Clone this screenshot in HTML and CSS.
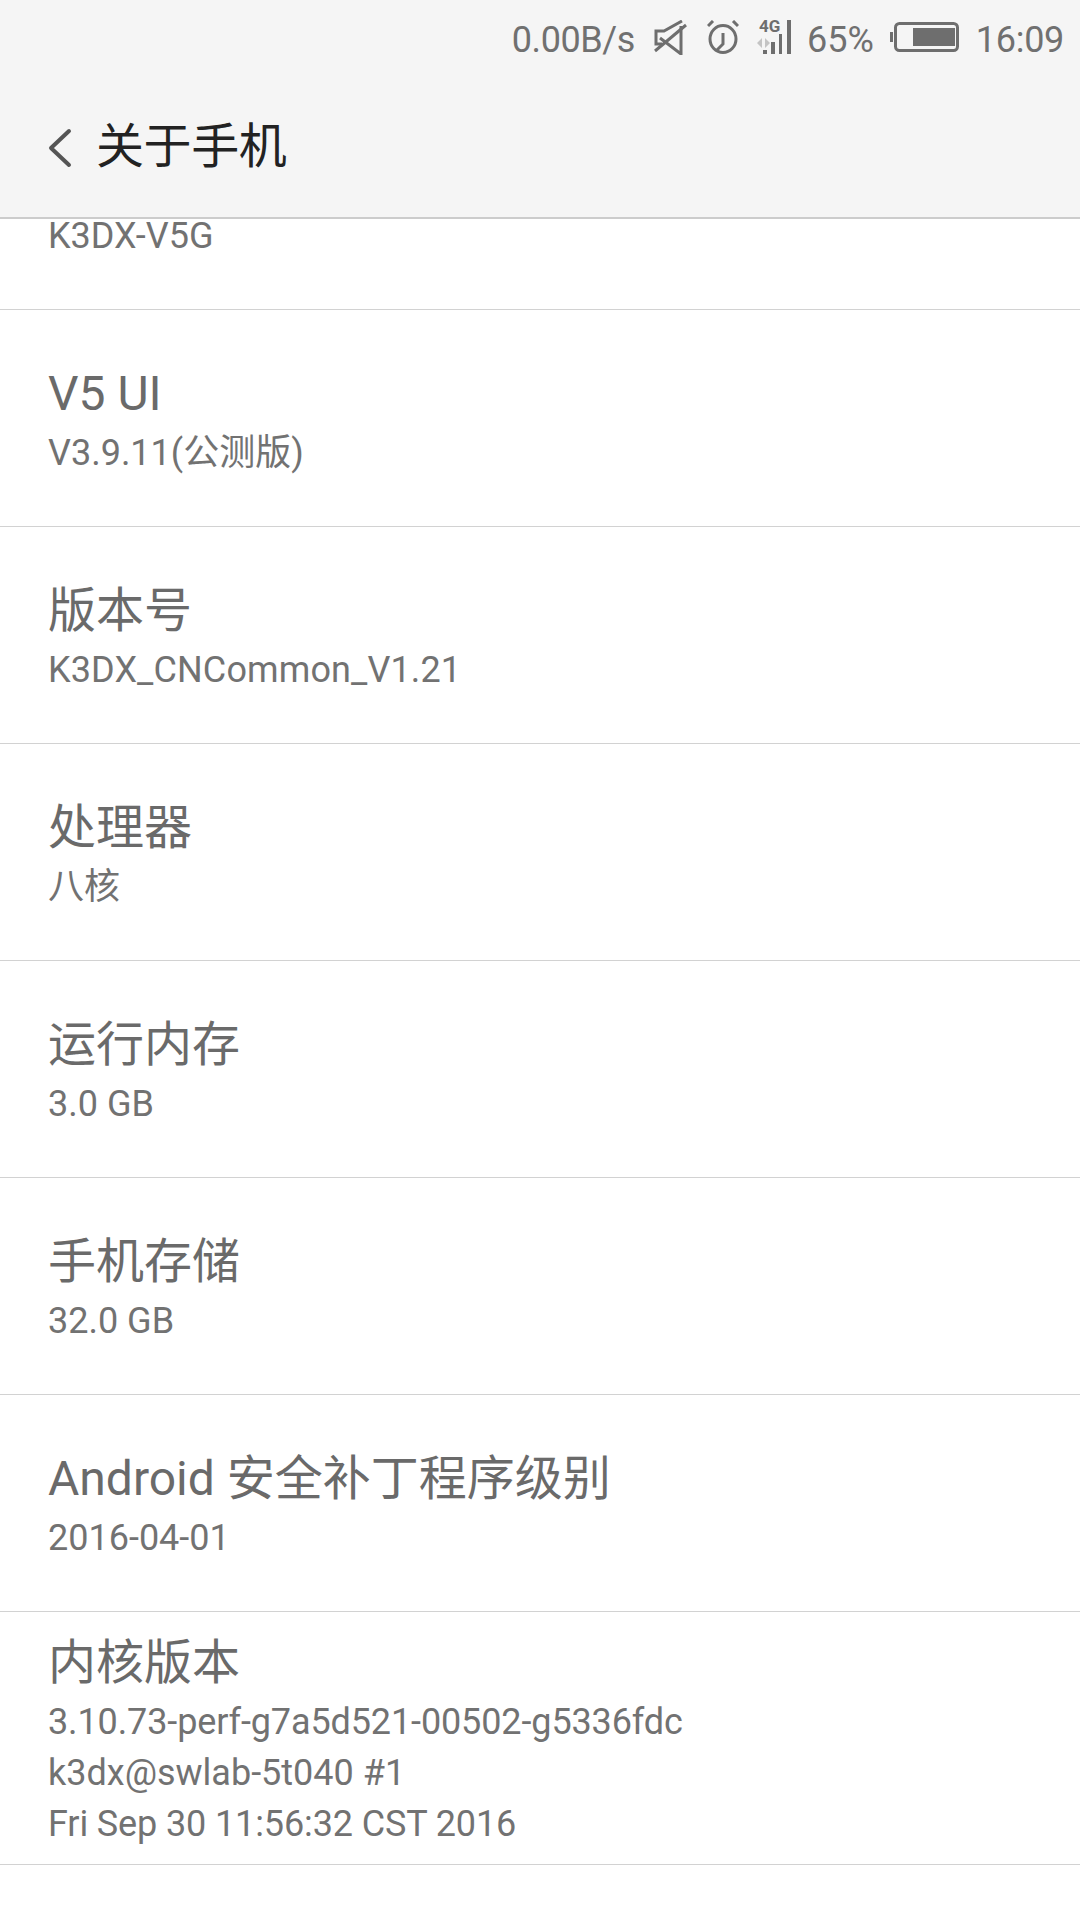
FILE: index.html
```html
<!DOCTYPE html>
<html lang="zh-CN">
<head>
    <meta charset="UTF-8">
    <meta name="viewport" content="width=device-width, initial-scale=1.0">
    <title>关于手机</title>
    <link rel="stylesheet" href="styles.css">
</head>
<body>
    <div class="top">
        <div class="status">
            <span class="speed">0.00B/s</span>
            <svg class="icon icon-mute" width="33" height="35" viewBox="0 0 33 35" fill="none" stroke="#6e6e6e" stroke-width="3">
                <path d="M8 24H2V11H10L28 1"/>
                <path d="M27 6V34L6 18"/>
                <path d="M1 31L32 5"/>
            </svg>
            <svg class="icon icon-alarm" width="32" height="34" viewBox="0 0 32 34" fill="none" stroke="#6e6e6e" stroke-width="3">
                <ellipse cx="16" cy="19" rx="13" ry="13.5"/>
                <path d="M16 13V24L10 30"/>
                <path d="M1 6L6 1M26 1L31 6"/>
            </svg>
            <div class="icon signal">
                <svg width="34" height="34" viewBox="0 0 34 34">
                    <rect x="6" y="30" width="4" height="4" fill="#6e6e6e"/>
                    <rect x="14" y="22" width="4" height="12" fill="#6e6e6e"/>
                    <rect x="22" y="14" width="3" height="20" fill="#6e6e6e"/>
                    <rect x="30" y="0" width="4" height="34" fill="#6e6e6e"/>
                    <path d="M5 18V28L0 23ZM8 18V28L13 23Z" fill="#c4c4c4"/>
                </svg>
                <span class="net">4G</span>
            </div>
            <span class="level">65%</span>
            <svg class="icon icon-battery" width="69" height="30" viewBox="0 0 69 30" fill="none">
                <rect x="0" y="10" width="3" height="10" fill="#6e6e6e"/>
                <rect x="5.5" y="1.5" width="62" height="27" rx="4" stroke="#6e6e6e" stroke-width="3"/>
                <rect x="23" y="6" width="42" height="18" fill="#6e6e6e"/>
            </svg>
            <span class="clock">16:09</span>
        </div>
        <div class="toolbar">
            <svg width="24" height="40" viewBox="0 0 24 40" fill="none" stroke="#555" stroke-width="4" stroke-linecap="round" stroke-linejoin="round">
                <path d="M21 3L3 20L21 37"/>
            </svg>
            <h1>关于手机</h1>
        </div>
    </div>

    <div class="list">
        <div class="row row-cut">
            <p class="sub">K3DX-V5G</p>
        </div>
        <div class="row">
            <p class="name">V5 UI</p>
            <p class="sub">V3.9.11(公测版)</p>
        </div>
        <div class="row">
            <p class="name">版本号</p>
            <p class="sub wide">K3DX_CNCommon_V1.21</p>
        </div>
        <div class="row">
            <p class="name">处理器</p>
            <p class="sub">八核</p>
        </div>
        <div class="row">
            <p class="name">运行内存</p>
            <p class="sub">3.0 GB</p>
        </div>
        <div class="row">
            <p class="name">手机存储</p>
            <p class="sub">32.0 GB</p>
        </div>
        <div class="row">
            <p class="name">Android 安全补丁程序级别</p>
            <p class="sub">2016-04-01</p>
        </div>
        <div class="row row-tall">
            <p class="name">内核版本</p>
            <p class="sub tight">3.10.73-perf-g7a5d521-00502-g5336fdc</p>
            <p class="sub">k3dx@swlab-5t040 #1</p>
            <p class="sub tight">Fri Sep 30 11:56:32 CST 2016</p>
        </div>
    </div>
</body>
</html>
```

FILE: styles.css
```css
* {
    box-sizing: border-box;
}

body {
    margin: 0;
    width: 1080px;
    height: 1920px;
    background: #fff;
    overflow: hidden;
    font-family: Roboto, "Noto Sans CJK SC", sans-serif;
}

.top {
    height: 219px;
    background: #f5f5f5;
    border-bottom: 2px solid #ccc;
}

.status {
    height: 78px;
    padding-right: 16px;
    display: flex;
    align-items: center;
    justify-content: flex-end;
    font-size: 36px;
    color: #707070;
}

.status > span {
    padding-top: 2px;
}

.status .icon {
    margin-bottom: 4px;
}

.speed {
    letter-spacing: -0.4px;
}

.clock {
    letter-spacing: -0.3px;
}

.status .icon-mute {
    margin-left: 19px;
}

.status .icon-alarm {
    margin-left: 20px;
}

.signal {
    position: relative;
    width: 34px;
    height: 34px;
    margin-left: 18px;
}

.signal svg {
    display: block;
}

.net {
    position: absolute;
    left: 2px;
    top: -2px;
    font-size: 17px;
    line-height: 17px;
    font-weight: 700;
    color: #6e6e6e;
}

.level {
    margin-left: 16px;
}

.status .icon-battery {
    margin-left: 16px;
    margin-right: 17px;
}

.toolbar {
    height: 139px;
    padding-left: 48px;
    display: flex;
    align-items: center;
    gap: 24px;
}

.toolbar h1 {
    margin: 0 0 12px;
    font-size: 48px;
    font-weight: 400;
    letter-spacing: -0.4px;
    color: #222;
}

.row {
    height: 217px;
    padding: 4px 0 0 48px;
    border-bottom: 1px solid #d2d2d2;
    display: flex;
    flex-direction: column;
    justify-content: center;
}

.row-cut {
    height: 91px;
    padding-top: 0;
    justify-content: flex-start;
}

.row-cut .sub {
    line-height: 34px;
}

.row-tall {
    height: 253px;
}

.row p {
    margin: 0;
}

.row .name + .sub {
    margin-top: 2px;
}

.row-tall .sub {
    line-height: 51px;
}

.name {
    font-size: 48px;
    line-height: 64px;
    color: #6a6a6a;
}

.sub {
    font-size: 36px;
    line-height: 50px;
    color: #727272;
}

.tight {
    letter-spacing: -0.12px;
}

.wide {
    letter-spacing: 0.12px;
}
```
